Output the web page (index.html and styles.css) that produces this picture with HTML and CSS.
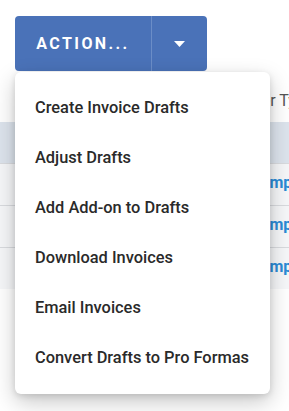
FILE: index.html
```html
<!DOCTYPE html>
<html lang="en">
<head>
    <meta charset="UTF-8">
    <meta name="viewport" content="width=device-width, initial-scale=1.0">
    <title>Invoices</title>
    <link rel="stylesheet" href="styles.css">
</head>
<body>
    <div class="page">
        <div class="action-group">
            <button type="button" class="action-main">ACTION...</button>
            <button type="button" class="action-caret">
                <svg width="11" height="6" viewBox="0 0 11 6"><path d="M0 0 L11 0 L5.5 6 Z" fill="#fff"/></svg>
            </button>
        </div>

        <div class="filters">
            <span class="filter-label">Customer Type</span>
        </div>

        <div class="grid">
            <div class="grid-head"></div>
            <div class="grid-row"><span></span><a class="link">Company A</a></div>
            <div class="grid-row"><span></span><a class="link">Company B</a></div>
            <div class="grid-row"><span></span><a class="link">Company C</a></div>
        </div>

        <!-- dropdown menu -->
        <ul class="menu">
            <li>Create Invoice Drafts</li>
            <li>Adjust Drafts</li>
            <li>Add Add-on to Drafts</li>
            <li>Download Invoices</li>
            <li>Email Invoices</li>
            <li>Convert Drafts to Pro Formas</li>
        </ul>
    </div>
</body>
</html>
```

FILE: styles.css
```css
body {
    margin: 0;
    font-family: Roboto, "Liberation Sans", sans-serif;
    background: #fff;
    color: #222;
}

.page {
    position: relative;
    height: 411px;
    box-sizing: border-box;
    padding-top: 16px;
    white-space: nowrap;
    overflow: hidden;
}

.action-group {
    display: inline-flex;
    margin-left: 15px;
    height: 55px;
    border-radius: 4px;
    background: #4a72b8;
    overflow: hidden;
}

.action-group button {
    border: none;
    background: transparent;
    color: #fff;
    font-family: inherit;
    display: flex;
    align-items: center;
    justify-content: center;
    padding: 0;
}

.action-main {
    width: 137px;
    font-size: 16px;
    font-weight: 700;
    letter-spacing: 2.4px;
    border-right: 1px solid #6b8dc7 !important;
}

.action-caret {
    width: 55px;
}

.filters {
    height: 51px;
    display: flex;
    align-items: center;
    padding-top: 8px;
    box-sizing: border-box;
    padding-left: 206px;
}

.filter-label {
    font-size: 16px;
    color: #555;
}

.grid-head {
    height: 41px;
    background: #dde4ed;
}

.grid-row {
    display: grid;
    grid-template-columns: 250px 1fr;
    align-items: center;
    height: 42px;
    padding-bottom: 4px;
    box-sizing: border-box;
    border-top: 1px solid #d9dbdf;
    background: #f6f7f9;
}

.link {
    color: #2b8bd6;
    font-weight: 700;
    font-size: 16px;
}

/* dropdown menu */
.menu {
    position: absolute;
    top: 72px;
    left: 15px;
    width: 255px;
    margin: 0;
    padding: 10px 0 12px;
    list-style: none;
    background: #fff;
    border-radius: 6px;
    box-shadow: 0 8px 22px rgba(0, 0, 0, 0.22), 0 2px 6px rgba(0, 0, 0, 0.12);
}

.menu li {
    height: 50px;
    display: flex;
    align-items: center;
    padding-left: 20px;
    font-size: 16.4px;
    font-weight: 500;
    color: #2a2a2a;
}
```
